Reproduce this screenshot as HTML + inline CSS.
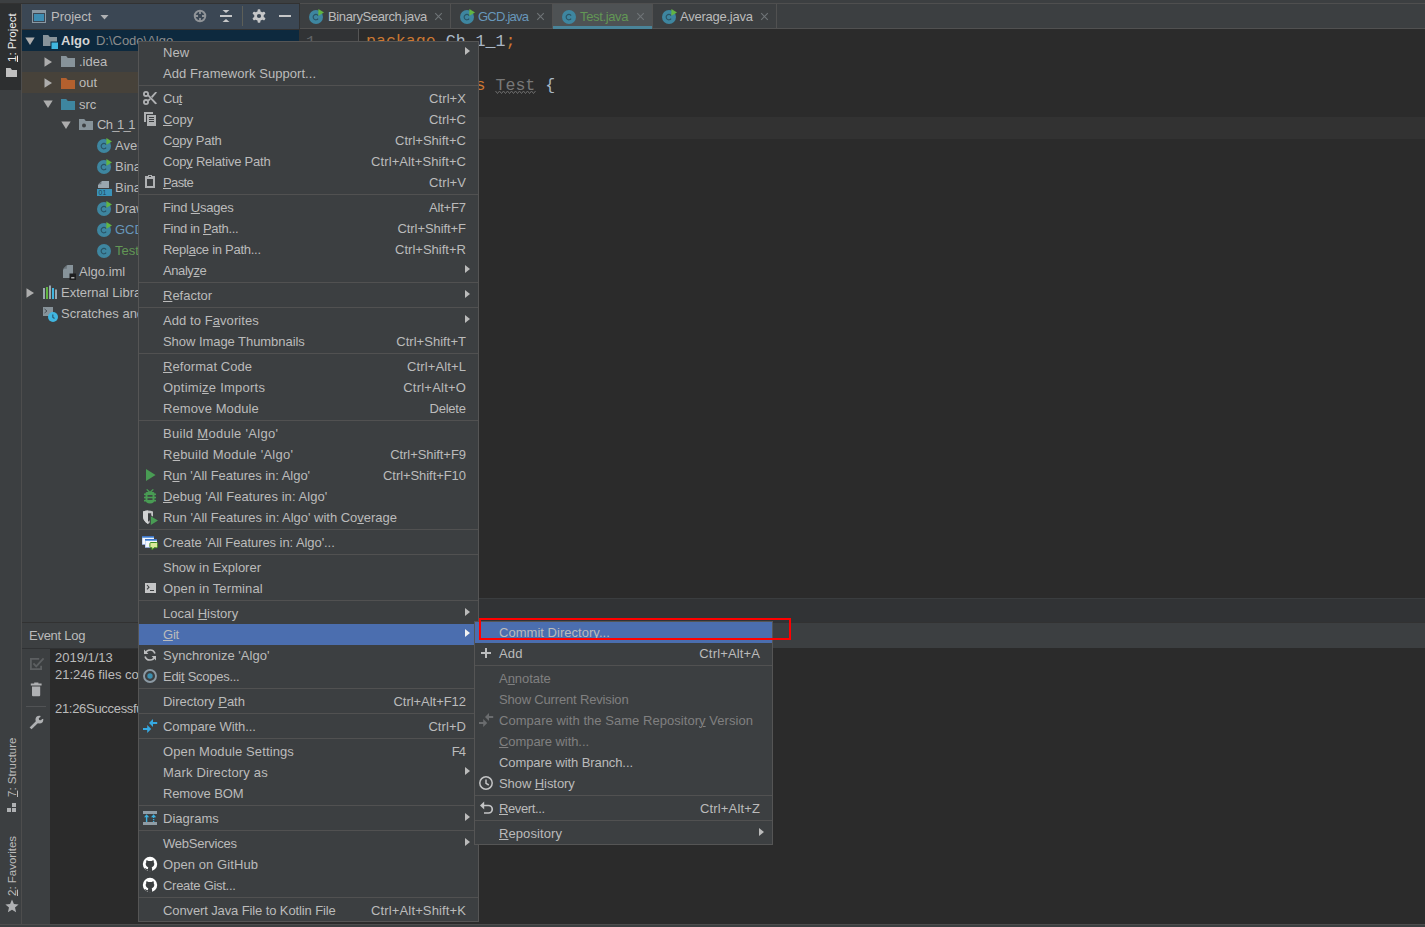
<!DOCTYPE html><html><head><meta charset="utf-8"><title>Algo</title><style>
*{box-sizing:border-box;margin:0;padding:0}
html,body{width:1425px;height:927px;overflow:hidden;background:#2b2b2b}
body{position:relative;font-family:"Liberation Sans",sans-serif;font-size:13px;color:#bbbbbb;line-height:21px;-webkit-font-smoothing:antialiased}
.abs{position:absolute}
.t{position:absolute;white-space:nowrap;height:21px;line-height:21px}
u{text-decoration:underline;text-underline-offset:1px;text-decoration-thickness:1px}
.menu{position:absolute;background:#3c3f41;border:1px solid #555555}
.mi{position:relative;height:21px;line-height:21px;white-space:nowrap}
.mi .l{position:absolute;left:24px;top:0}
.mi .s{position:absolute;right:12px;top:0}
.mi .ar{position:absolute;right:8.5px;top:5px;width:0;height:0;border-left:5.5px solid #bbbbbb;border-top:4.8px solid transparent;border-bottom:4.8px solid transparent}
.mi .ic{position:absolute;left:3px;top:2px;width:16px;height:16px}
.mi.sel{background:#4b6eaf}
.mi.sel .ar{border-left-color:#f2f2f2}
.mi.dis{color:#808080}
.sep{height:4px;position:relative}
.sep:after{content:"";position:absolute;left:0;right:0;top:1px;height:1px;background:#515151}
.row{position:absolute;left:22px;width:277px;height:21px}
.mono{font-family:"Liberation Mono",monospace;font-size:16.6px;line-height:22px;white-space:pre;position:absolute;height:22px}
.vt{position:absolute;white-space:nowrap;transform-origin:0 0;transform:rotate(-90deg);font-size:11.5px;line-height:14px;height:14px}
</style></head><body>
<div class="abs" style="left:0px;top:0px;width:1425px;height:4px;background:#3c3f41;"></div>
<div class="abs" style="left:0px;top:3px;width:1425px;height:1px;background:#323232;"></div>
<div class="abs" style="left:0px;top:4px;width:21px;height:920px;background:#3c3f41;"></div>
<div class="abs" style="left:0px;top:4px;width:21px;height:86px;background:#2d2f30;"></div>
<div class="abs" style="left:21px;top:4px;width:1px;height:920px;background:#4d4d4d;"></div>
<div class="abs" style="left:22px;top:4px;width:277px;height:25px;background:#3b4754;"></div>
<div class="abs" style="left:22px;top:29px;width:277px;height:1px;background:#323232;"></div>
<div class="abs" style="left:22px;top:30px;width:277px;height:592px;background:#3c3f41;"></div>
<div class="abs" style="left:299px;top:4px;width:1px;height:619px;background:#323232;"></div>
<div class="abs" style="left:22px;top:30px;width:277px;height:21px;background:#0d293e;"></div>
<div class="abs" style="left:22px;top:72px;width:277px;height:21px;background:#47423a;"></div>
<div class="abs" style="left:300px;top:3px;width:1125px;height:1px;background:#4f4f4f;"></div>
<div class="abs" style="left:300px;top:4px;width:1125px;height:24px;background:#3c3f41;"></div>
<div class="abs" style="left:300px;top:28px;width:1125px;height:1px;background:#515151;"></div>
<div class="abs" style="left:300px;top:29px;width:58px;height:569px;background:#313335;"></div>
<div class="abs" style="left:358px;top:29px;width:1px;height:569px;background:#555555;"></div>
<div class="abs" style="left:359px;top:29px;width:1066px;height:569px;background:#2b2b2b;"></div>
<div class="abs" style="left:359px;top:117px;width:1066px;height:22px;background:#323232;"></div>
<div class="abs" style="left:22px;top:598px;width:1403px;height:25px;background:#313335;"></div>
<div class="abs" style="left:300px;top:598px;width:1125px;height:1px;background:#3a3d3f;"></div>
<div class="abs" style="left:22px;top:597px;width:277px;height:26px;background:#3c3f41;"></div>
<div class="abs" style="left:22px;top:622px;width:1403px;height:1px;background:#323232;"></div>
<div class="abs" style="left:22px;top:623px;width:1403px;height:25px;background:#3c3f41;"></div>
<div class="abs" style="left:22px;top:648px;width:28px;height:277px;background:#3c3f41;"></div>
<div class="abs" style="left:50px;top:648px;width:1375px;height:277px;background:#2b2b2b;"></div>
<div class="abs" style="left:0px;top:924px;width:1425px;height:3px;background:#3c3f41;"></div>
<div class="abs" style="left:0px;top:924px;width:1425px;height:1px;background:#4d4d4d;"></div>
<div class="vt" style="left:5px;top:62px;color:#ededed"><u>1</u>: Project</div>
<svg class="abs" style="left:6px;top:68px;" width="12" height="10" viewBox="0 0 12 10"><path d="M0 0 H4.5 L6 2 H11 V9 H0 Z" fill="#c0c0c0"/></svg>
<div class="vt" style="left:5px;top:797px;color:#bbbbbb"><u>7</u>: Structure</div>
<svg class="abs" style="left:7px;top:803px;" width="9" height="9" viewBox="0 0 9 9"><rect x="0" y="5" width="4" height="4" fill="#afb1b3"/><rect x="5" y="5" width="4" height="4" fill="#afb1b3"/><rect x="5" y="0" width="4" height="4" fill="#afb1b3"/></svg>
<div class="vt" style="left:5px;top:896px;color:#bbbbbb"><u>2</u>: Favorites</div>
<svg class="abs" style="left:5px;top:899px;" width="14" height="14" viewBox="0 0 14 14"><path d="M7 0.5 L8.9 5 L13.6 5.4 L10 8.6 L11.1 13.3 L7 10.8 L2.9 13.3 L4 8.6 L0.4 5.4 L5.1 5 Z" fill="#afb1b3"/></svg>
<svg class="abs" style="left:32px;top:10px;" width="14" height="13" viewBox="0 0 14 13"><rect x="0" y="0" width="14" height="13" fill="#8a98a3"/><rect x="1" y="3" width="12" height="9" fill="#3b4754"/><rect x="2" y="4" width="10" height="7" fill="#3e8cb2"/></svg>
<div class="t" style="left:51px;top:6px;">Project</div>
<svg class="abs" style="left:100px;top:15px;" width="9" height="5" viewBox="0 0 9 5"><path d="M0.5 0 H8.5 L4.5 4.5 Z" fill="#afb1b3"/></svg>
<svg class="abs" style="left:193px;top:9px;" width="14" height="14" viewBox="0 0 14 14"><circle cx="7" cy="7" r="5.3" fill="none" stroke="#909498" stroke-width="1.9"/><path d="M7 1.5 V5 M7 9 V12.5 M1.5 7 H5 M9 7 H12.5" stroke="#909498" stroke-width="1.8"/></svg>
<svg class="abs" style="left:219px;top:9px;" width="14" height="14" viewBox="0 0 14 14"><rect x="1" y="6" width="12" height="2" fill="#c6c7c8"/><path d="M3.5 1 H10.5 L7 4 Z" fill="#c6c7c8"/><path d="M3.5 13 H10.5 L7 10 Z" fill="#c6c7c8"/></svg>
<div class="abs" style="left:242px;top:6px;width:1px;height:20px;background:#5d5f58;"></div>
<svg class="abs" style="left:252px;top:9px;" width="14" height="14" viewBox="0 0 14 14"><g fill="#c6c7c8"><rect x="5.6" y="0.2" width="2.8" height="13.6" rx="0.8" transform="rotate(0 7 7)"/><rect x="5.6" y="0.2" width="2.8" height="13.6" rx="0.8" transform="rotate(60 7 7)"/><rect x="5.6" y="0.2" width="2.8" height="13.6" rx="0.8" transform="rotate(120 7 7)"/><circle cx="7" cy="7" r="4.8"/></g><circle cx="7" cy="7" r="2.1" fill="#3b4754"/></svg>
<div class="abs" style="left:279px;top:15px;width:12px;height:2px;background:#c6c7c8;"></div>
<svg class="abs" style="left:25px;top:37px;" width="10" height="8" viewBox="0 0 10 8"><path d="M0.3 0.5 H9.7 L5 8 Z" fill="#adadad"/></svg>
<svg class="abs" style="left:42px;top:33px;" width="16" height="16" viewBox="0 0 16 16"><path d="M1 2 H6.2 L7.8 4 H15 V13 H1 Z" fill="#87939a"/><rect x="8.5" y="8.5" width="7.5" height="7.5" fill="#0d293e"/><rect x="9.5" y="9.5" width="6.5" height="6.5" fill="#40b6e0"/></svg>
<div class="t" style="left:61px;top:30px;"><b style="color:#d4d4d4">Algo</b><span style="color:#8c8c8c;margin-left:6px">D:\Code\Algo</span></div>
<svg class="abs" style="left:44px;top:57px;" width="8" height="10" viewBox="0 0 8 10"><path d="M0.5 0.3 V9.7 L8 5 Z" fill="#adadad"/></svg>
<svg class="abs" style="left:60px;top:54px;" width="16" height="16" viewBox="0 0 16 16"><path d="M1 2 H6.2 L7.8 4 H15 V13 H1 Z" fill="#87939a"/></svg>
<div class="t" style="left:79px;top:51px;">.idea</div>
<svg class="abs" style="left:44px;top:78px;" width="8" height="10" viewBox="0 0 8 10"><path d="M0.5 0.3 V9.7 L8 5 Z" fill="#adadad"/></svg>
<svg class="abs" style="left:60px;top:76px;" width="16" height="16" viewBox="0 0 16 16"><path d="M1 2 H6.2 L7.8 4 H15 V13 H1 Z" fill="#b3602e"/></svg>
<div class="t" style="left:79px;top:72px;">out</div>
<svg class="abs" style="left:43px;top:100px;" width="10" height="8" viewBox="0 0 10 8"><path d="M0.3 0.5 H9.7 L5 8 Z" fill="#adadad"/></svg>
<svg class="abs" style="left:60px;top:97px;" width="16" height="16" viewBox="0 0 16 16"><path d="M1 2 H6.2 L7.8 4 H15 V13 H1 Z" fill="#3e86a0"/></svg>
<div class="t" style="left:79px;top:94px;">src</div>
<svg class="abs" style="left:61px;top:121px;" width="10" height="8" viewBox="0 0 10 8"><path d="M0.3 0.5 H9.7 L5 8 Z" fill="#adadad"/></svg>
<svg class="abs" style="left:78px;top:117px;" width="16" height="16" viewBox="0 0 16 16"><path d="M1 2 H6.2 L7.8 4 H15 V13 H1 Z" fill="#87939a"/><circle cx="6" cy="8.6" r="2" fill="#3c3f41"/></svg>
<div class="t" style="left:97px;top:114px;"><span style="letter-spacing:-0.75px">Ch<span style="letter-spacing:-2.4px">_</span>1<span style="letter-spacing:-2.4px">_</span>1</span></div>
<svg class="abs" style="left:96px;top:138px;" width="16" height="16" viewBox="0 0 16 16"><circle cx="8" cy="8" r="7" fill="#3e86a0"/><path d="M10.1 6.6 A2.7 2.7 0 1 0 10.1 9.6" fill="none" stroke="#2a5364" stroke-width="1.15"/><path d="M10.4 0 L16 3.4 L10.4 6.8 Z" fill="#62b543"/></svg>
<div class="t" style="left:115px;top:135px;">Average</div>
<svg class="abs" style="left:96px;top:159px;" width="16" height="16" viewBox="0 0 16 16"><circle cx="8" cy="8" r="7" fill="#3e86a0"/><path d="M10.1 6.6 A2.7 2.7 0 1 0 10.1 9.6" fill="none" stroke="#2a5364" stroke-width="1.15"/><path d="M10.4 0 L16 3.4 L10.4 6.8 Z" fill="#62b543"/></svg>
<div class="t" style="left:115px;top:156px;">BinarySearch</div>
<svg class="abs" style="left:96px;top:180px;" width="16" height="16" viewBox="0 0 16 16"><path d="M6 1 H13 V8 H2 V5 Z" fill="#9aa7b0"/><path d="M5.3 1.2 V4.3 H2.2 Z" fill="#6c767c"/><rect x="1" y="9" width="15" height="7" fill="#3a92b8"/><text x="2.6" y="15" font-family="Liberation Sans,sans-serif" font-size="7" fill="#1f4456">01</text></svg>
<div class="t" style="left:115px;top:177px;">BinarySearch</div>
<svg class="abs" style="left:96px;top:201px;" width="16" height="16" viewBox="0 0 16 16"><circle cx="8" cy="8" r="7" fill="#3e86a0"/><path d="M10.1 6.6 A2.7 2.7 0 1 0 10.1 9.6" fill="none" stroke="#2a5364" stroke-width="1.15"/><path d="M10.4 0 L16 3.4 L10.4 6.8 Z" fill="#62b543"/></svg>
<div class="t" style="left:115px;top:198px;">Draw</div>
<svg class="abs" style="left:96px;top:222px;" width="16" height="16" viewBox="0 0 16 16"><circle cx="8" cy="8" r="7" fill="#3e86a0"/><path d="M10.1 6.6 A2.7 2.7 0 1 0 10.1 9.6" fill="none" stroke="#2a5364" stroke-width="1.15"/><path d="M10.4 0 L16 3.4 L10.4 6.8 Z" fill="#62b543"/></svg>
<div class="t" style="left:115px;top:219px;"><span style="color:#6897bb">GCD</span></div>
<svg class="abs" style="left:96px;top:243px;" width="16" height="16" viewBox="0 0 16 16"><circle cx="8" cy="8" r="7" fill="#3e86a0"/><path d="M10.1 6.6 A2.7 2.7 0 1 0 10.1 9.6" fill="none" stroke="#2a5364" stroke-width="1.15"/></svg>
<div class="t" style="left:115px;top:240px;"><span style="color:#629755">Test</span></div>
<svg class="abs" style="left:60px;top:264px;" width="16" height="16" viewBox="0 0 16 16"><path d="M7.5 1 H13 V14 H3 V5.5 Z" fill="#87939a"/><path d="M6.8 1 V4.8 H3 Z" fill="#6a747a"/><rect x="9.5" y="9.5" width="6.5" height="6.5" fill="#1e1f20"/><rect x="11.2" y="13.2" width="3.2" height="1.2" fill="#d0d0d0"/></svg>
<div class="t" style="left:79px;top:261px;">Algo.iml</div>
<svg class="abs" style="left:26px;top:288px;" width="8" height="10" viewBox="0 0 8 10"><path d="M0.5 0.3 V9.7 L8 5 Z" fill="#adadad"/></svg>
<svg class="abs" style="left:42px;top:285px;" width="16" height="16" viewBox="0 0 16 16"><rect x="1" y="3" width="2" height="11" fill="#9aa7b0"/><rect x="4" y="2" width="2" height="12" fill="#62b543"/><rect x="7" y="0.5" width="2" height="13.5" fill="#9aa7b0"/><rect x="10" y="3" width="2" height="11" fill="#40b6e0"/><rect x="13" y="4.5" width="2" height="9.5" fill="#9aa7b0"/></svg>
<div class="t" style="left:61px;top:282px;">External Libraries</div>
<svg class="abs" style="left:42px;top:306px;" width="16" height="16" viewBox="0 0 16 16"><rect x="1" y="1" width="10" height="9" fill="#87939a"/><path d="M2.5 3 L5 5 L2.5 7" fill="none" stroke="#4a5156" stroke-width="1"/><circle cx="11" cy="11" r="5" fill="#40b6e0"/><path d="M10.8 8.5 V11.3 L12.5 12.6" fill="none" stroke="#2a5a72" stroke-width="1.2"/></svg>
<div class="t" style="left:61px;top:303px;">Scratches and Consoles</div>
<svg class="abs" style="left:308px;top:9px;" width="16" height="16" viewBox="0 0 16 16"><circle cx="8" cy="8" r="7" fill="#3e86a0"/><path d="M10.1 6.6 A2.7 2.7 0 1 0 10.1 9.6" fill="none" stroke="#2a5364" stroke-width="1.15"/><path d="M10.4 0 L16 3.4 L10.4 6.8 Z" fill="#62b543"/></svg>
<div class="t" style="left:328px;top:6px;"><span style="color:#bbbbbb;letter-spacing:-0.387px">BinarySearch.java</span></div>
<svg class="abs" style="left:434px;top:12px;" width="9" height="9" viewBox="0 0 9 9"><path d="M1.2 1.2 L7.8 7.8 M7.8 1.2 L1.2 7.8" stroke="#6f7477" stroke-width="1.1" fill="none"/></svg>
<div class="abs" style="left:450px;top:4px;width:1px;height:24px;background:#515151;"></div>
<svg class="abs" style="left:459px;top:9px;" width="16" height="16" viewBox="0 0 16 16"><circle cx="8" cy="8" r="7" fill="#3e86a0"/><path d="M10.1 6.6 A2.7 2.7 0 1 0 10.1 9.6" fill="none" stroke="#2a5364" stroke-width="1.15"/><path d="M10.4 0 L16 3.4 L10.4 6.8 Z" fill="#62b543"/></svg>
<div class="t" style="left:478px;top:6px;"><span style="color:#6897bb;letter-spacing:-0.757px">GCD.java</span></div>
<svg class="abs" style="left:536px;top:12px;" width="9" height="9" viewBox="0 0 9 9"><path d="M1.2 1.2 L7.8 7.8 M7.8 1.2 L1.2 7.8" stroke="#6f7477" stroke-width="1.1" fill="none"/></svg>
<div class="abs" style="left:552px;top:4px;width:1px;height:24px;background:#515151;"></div>
<div class="abs" style="left:553px;top:4px;width:99px;height:24px;background:#4e5254;"></div>
<div class="abs" style="left:553px;top:26px;width:99px;height:3px;background:#4a8499;"></div>
<svg class="abs" style="left:561px;top:9px;" width="16" height="16" viewBox="0 0 16 16"><circle cx="8" cy="8" r="7" fill="#3e86a0"/><path d="M10.1 6.6 A2.7 2.7 0 1 0 10.1 9.6" fill="none" stroke="#2a5364" stroke-width="1.15"/></svg>
<div class="t" style="left:580px;top:6px;"><span style="color:#629755;letter-spacing:-0.362px">Test.java</span></div>
<svg class="abs" style="left:636px;top:12px;" width="9" height="9" viewBox="0 0 9 9"><path d="M1.2 1.2 L7.8 7.8 M7.8 1.2 L1.2 7.8" stroke="#6f7477" stroke-width="1.1" fill="none"/></svg>
<div class="abs" style="left:652px;top:4px;width:1px;height:24px;background:#515151;"></div>
<svg class="abs" style="left:661px;top:9px;" width="16" height="16" viewBox="0 0 16 16"><circle cx="8" cy="8" r="7" fill="#3e86a0"/><path d="M10.1 6.6 A2.7 2.7 0 1 0 10.1 9.6" fill="none" stroke="#2a5364" stroke-width="1.15"/><path d="M10.4 0 L16 3.4 L10.4 6.8 Z" fill="#62b543"/></svg>
<div class="t" style="left:680px;top:6px;"><span style="color:#bbbbbb;letter-spacing:-0.245px">Average.java</span></div>
<svg class="abs" style="left:760px;top:12px;" width="9" height="9" viewBox="0 0 9 9"><path d="M1.2 1.2 L7.8 7.8 M7.8 1.2 L1.2 7.8" stroke="#6f7477" stroke-width="1.1" fill="none"/></svg>
<div class="abs" style="left:776px;top:4px;width:1px;height:24px;background:#515151;"></div>
<div class="mono" style="left:306px;top:32px;color:#606366;font-size:16px">1</div>
<div class="mono" style="left:366px;top:31px;color:#a9b7c6"><span style="color:#cc7832">package</span> Ch_1_1<span style="color:#cc7832">;</span></div>
<div class="mono" style="left:366px;top:75px;color:#a9b7c6"><span style="color:#cc7832">public class</span> <span style="color:#787878">Test</span> {</div>
<svg class="abs" style="left:495px;top:90px;" width="42" height="5" viewBox="0 0 42 5"><path d="M0.5 1 L2.5 3.5 L4.5 1 L6.5 3.5 L8.5 1 L10.5 3.5 L12.5 1 L14.5 3.5 L16.5 1 L18.5 3.5 L20.5 1 L22.5 3.5 L24.5 1 L26.5 3.5 L28.5 1 L30.5 3.5 L32.5 1 L34.5 3.5 L36.5 1 L38.5 3.5 L40.5 1" fill="none" stroke="#6c6c6c" stroke-width="1"/></svg>
<div class="abs" style="left:22px;top:648px;width:116px;height:1px;background:#2f3133;"></div>
<div class="t" style="left:29px;top:625px;"><span style="letter-spacing:-0.263px">Event Log</span></div>
<svg class="abs" style="left:29px;top:657px;" width="16" height="16" viewBox="0 0 16 16"><path d="M10.2 1.9 H1.9 V12.1 H12.1 V8.8" fill="none" stroke="#5c5f61" stroke-width="1.8"/><path d="M4.4 6.4 L7.2 9.4 L14.6 1.4" fill="none" stroke="#5c5f61" stroke-width="1.8"/></svg>
<svg class="abs" style="left:29px;top:682px;" width="16" height="16" viewBox="0 0 16 16"><path d="M1.8 1.5 H5.2 V0.6 H9.4 V1.5 H12.6 V3.5 H1.8 Z" fill="#afb1b3"/><path d="M3 4.6 H11.2 V13.2 Q11.2 14.2 10.2 14.2 H4 Q3 14.2 3 13.2 Z" fill="#afb1b3"/></svg>
<div class="abs" style="left:26px;top:706px;width:20px;height:1px;background:#515355;"></div>
<svg class="abs" style="left:29px;top:714px;" width="16" height="16" viewBox="0 0 16 16"><path d="M1.6 14.4 L8.8 7.2" stroke="#afb1b3" stroke-width="2.7" fill="none"/><circle cx="10.4" cy="5.6" r="3.9" fill="#afb1b3"/><path d="M10.6 5.4 L12.2 0 L17 4.4 Z" fill="#3c3f41"/><circle cx="11.3" cy="4.7" r="1.5" fill="#3c3f41"/></svg>
<div class="t" style="left:55px;top:647px;">2019/1/13</div>
<div class="t" style="left:55px;top:664px;">21:246 files co</div>
<div class="t" style="left:55px;top:698px;"><span style="letter-spacing:-0.3px">21:26Successfully</span></div>
<div class="menu" style="left:138px;top:41px;width:341px">
<div class="mi"><span class="l" style="letter-spacing:0.1px">New</span><span class="ar"></span></div>
<div class="mi"><span class="l" style="letter-spacing:0.057px">Add Framework Support...</span></div>
<div class="sep"></div>
<div class="mi"><svg class="ic" viewBox="0 0 16 16"><g fill="none" stroke="#afb1b3" stroke-width="1.8"><circle cx="4" cy="3.9" r="2.1"/><circle cx="4" cy="12.1" r="2.1"/></g><path d="M5.2 5.6 L6.6 4.6 L15.2 13.4 L13.2 14.2 Z" fill="#afb1b3"/><path d="M5.2 10.4 L7.4 8.2 L8.8 9.6 L6.6 11.4 Z" fill="#afb1b3"/><path d="M9 6.6 L13.2 2 L15.2 2.2 L10.4 8 Z" fill="#afb1b3"/></svg><span class="l" style="letter-spacing:-0.45px">Cu<u>t</u></span><span class="s" style="letter-spacing:0.1px;margin-right:-0.1px">Ctrl+X</span></div>
<div class="mi"><svg class="ic" viewBox="0 0 16 16"><path d="M2 1 H11 V3 H4 V11 H2 Z" fill="#afb1b3"/><rect x="5" y="4" width="9" height="11" fill="#afb1b3"/><rect x="7" y="6" width="5" height="1" fill="#3c3f41"/><rect x="7" y="8" width="5" height="1" fill="#3c3f41"/><rect x="7" y="10" width="5" height="1" fill="#3c3f41"/></svg><span class="l" style="letter-spacing:-0.067px"><u>C</u>opy</span><span class="s" style="letter-spacing:-0.04px;margin-right:0.04px">Ctrl+C</span></div>
<div class="mi"><span class="l" style="letter-spacing:-0.237px">C<u>o</u>py Path</span><span class="s" style="letter-spacing:0.009px;margin-right:-0.009px">Ctrl+Shift+C</span></div>
<div class="mi"><span class="l" style="letter-spacing:-0.212px">Cop<u>y</u> Relative Path</span><span class="s" style="letter-spacing:0.087px;margin-right:-0.087px">Ctrl+Alt+Shift+C</span></div>
<div class="mi"><svg class="ic" viewBox="0 0 16 16"><path d="M3 2 H6 V1 H10 V2 H13 V14 H3 Z M5 5 V12 H11 V5 Z" fill="#afb1b3" fill-rule="evenodd"/><rect x="7" y="2" width="2" height="1" fill="#3c3f41"/></svg><span class="l" style="letter-spacing:-0.625px"><u>P</u>aste</span><span class="s" style="letter-spacing:0.1px;margin-right:-0.1px">Ctrl+V</span></div>
<div class="sep"></div>
<div class="mi"><span class="l" style="letter-spacing:-0.23px">Find <u>U</u>sages</span><span class="s" style="letter-spacing:-0.18px;margin-right:0.18px">Alt+F7</span></div>
<div class="mi"><span class="l" style="letter-spacing:-0.329px">Find in <u>P</u>ath...</span><span class="s" style="letter-spacing:-0.073px;margin-right:0.073px">Ctrl+Shift+F</span></div>
<div class="mi"><span class="l" style="letter-spacing:-0.271px">Repl<u>a</u>ce in Path...</span><span class="s" style="letter-spacing:0.009px;margin-right:-0.009px">Ctrl+Shift+R</span></div>
<div class="mi"><span class="l" style="letter-spacing:-0.417px">Analy<u>z</u>e</span><span class="ar"></span></div>
<div class="sep"></div>
<div class="mi"><span class="l"><u>R</u>efactor</span><span class="ar"></span></div>
<div class="sep"></div>
<div class="mi"><span class="l" style="letter-spacing:0.073px">Add to F<u>a</u>vorites</span><span class="ar"></span></div>
<div class="mi"><span class="l" style="letter-spacing:-0.05px">Show Image Thumbnails</span><span class="s" style="letter-spacing:0.036px;margin-right:-0.036px">Ctrl+Shift+T</span></div>
<div class="sep"></div>
<div class="mi"><span class="l" style="letter-spacing:0.075px"><u>R</u>eformat Code</span><span class="s" style="letter-spacing:0.133px;margin-right:-0.133px">Ctrl+Alt+L</span></div>
<div class="mi"><span class="l" style="letter-spacing:0.247px">Optimi<u>z</u>e Imports</span><span class="s" style="letter-spacing:0.233px;margin-right:-0.233px">Ctrl+Alt+O</span></div>
<div class="mi"><span class="l" style="letter-spacing:0.092px">Remove Module</span><span class="s" style="letter-spacing:-0.22px;margin-right:0.22px">Delete</span></div>
<div class="sep"></div>
<div class="mi"><span class="l" style="letter-spacing:0.289px">Build <u>M</u>odule 'Algo'</span></div>
<div class="mi"><span class="l" style="letter-spacing:0.25px">R<u>e</u>build Module 'Algo'</span><span class="s" style="letter-spacing:-0.067px;margin-right:0.067px">Ctrl+Shift+F9</span></div>
<div class="mi"><svg class="ic" viewBox="0 0 16 16"><path d="M4 2 L13.6 8 L4 14 Z" fill="#499c54"/></svg><span class="l" style="letter-spacing:-0.038px">R<u>u</u>n 'All Features in: Algo'</span><span class="s" style="letter-spacing:-0.062px;margin-right:0.062px">Ctrl+Shift+F10</span></div>
<div class="mi"><svg class="ic" viewBox="0 0 16 16"><g fill="#499c54"><path d="M5.2 1 L8 3.6 L10.8 1 L11.8 1.8 L9 4.6 H7 L4.2 1.8 Z"/><path d="M4.5 4 H11.5 Q12.5 4 12.5 5.5 V11 Q12.5 15.5 8 15.5 Q3.5 15.5 3.5 11 V5.5 Q3.5 4 4.5 4 Z"/><rect x="2" y="5.5" width="12" height="1.6"/><rect x="2" y="8.7" width="12" height="1.6"/><rect x="2" y="11.9" width="12" height="1.6"/></g><rect x="5.5" y="7.1" width="5" height="1.6" fill="#3c3f41"/><rect x="5.5" y="10.3" width="5" height="1.6" fill="#3c3f41"/></svg><span class="l" style="letter-spacing:0.064px"><u>D</u>ebug 'All Features in: Algo'</span></div>
<div class="mi"><svg class="ic" viewBox="0 0 16 16"><path d="M1 2.4 Q6 0.8 11 2.4 V8 Q10.6 12.2 6 15 Q1.4 12.2 1 8 Z" fill="#c3c4c5"/><path d="M1 2.4 Q3.5 1.6 6 1.6 V15 Q1.4 12.2 1 8 Z" fill="#d2d3d4"/><path d="M6 4.2 H9.2 V8 Q9 10.8 6 12.8 Z" fill="#3c3f41"/><path d="M7.6 5.4 L17 11.4 L7.6 17.4 Z" fill="#3c3f41"/><path d="M8.8 7.2 L16 11.6 L8.8 16 Z" fill="#499c54"/></svg><span class="l" style="letter-spacing:-0.02px">Run 'All Features in: Algo' with Co<u>v</u>erage</span></div>
<div class="sep"></div>
<div class="mi"><svg class="ic" viewBox="0 0 16 16"><defs><linearGradient id="cg" x1="0" y1="0" x2="0" y2="1"><stop offset="0" stop-color="#2a5fb8"/><stop offset="1" stop-color="#7fb4ea"/></linearGradient></defs><rect x="0" y="2" width="12" height="9" fill="#f4f7fd"/><rect x="0" y="2" width="12" height="2" fill="url(#cg)"/><rect x="0" y="4" width="1" height="7" fill="#c5d4f0"/><rect x="0" y="10" width="12" height="1" fill="#8da4d4"/><rect x="3" y="5" width="12" height="9" fill="#f4f7fd"/><rect x="3" y="5" width="12" height="2" fill="url(#cg)"/><rect x="3" y="7" width="1" height="7" fill="#c5d4f0"/><rect x="3" y="13" width="5" height="1" fill="#8da4d4"/><path d="M9 8.5 H14.5 Q15.6 8.5 15.6 9.6 V12.6 Q15.6 13.7 14.5 13.7 H12 L10 16 V13.7 H9 Q7.9 13.7 7.9 12.6 V9.6 Q7.9 8.5 9 8.5 Z" fill="#d9ea9a" stroke="#3f8f22" stroke-width="1"/></svg><span class="l" style="letter-spacing:-0.072px">Create 'All Features in: Algo'...</span></div>
<div class="sep"></div>
<div class="mi"><span class="l" style="letter-spacing:-0.02px">Show in Explorer</span></div>
<div class="mi"><svg class="ic" viewBox="0 0 16 16"><rect x="3" y="3" width="11" height="10" fill="#c4c5c6"/><path d="M5 5 L7 7.2 L5 9.4" fill="none" stroke="#3c3f41" stroke-width="1.1"/><rect x="8" y="10" width="4" height="1" fill="#3c3f41"/></svg><span class="l" style="letter-spacing:0.107px">Open in Terminal</span></div>
<div class="sep"></div>
<div class="mi"><span class="l">Local <u>H</u>istory</span><span class="ar"></span></div>
<div class="mi sel"><span class="l" style="letter-spacing:-0.25px"><u>G</u>it</span><span class="ar"></span></div>
<div class="mi"><svg class="ic" viewBox="0 0 16 16"><g fill="none" stroke="#bcbdbe" stroke-width="1.7"><path d="M3.4 6.3 A5 5 0 0 1 12.9 6.6"/><path d="M12.6 9.7 A5 5 0 0 1 3.1 9.4"/></g><path d="M2 2.6 V7 H6.4 Z" fill="#bcbdbe"/><path d="M14 13.4 V9 H9.6 Z" fill="#bcbdbe"/></svg><span class="l" style="letter-spacing:0.018px">Synchronize 'Algo'</span></div>
<div class="mi"><svg class="ic" viewBox="0 0 16 16"><circle cx="8" cy="8" r="6" fill="none" stroke="#8c9aa4" stroke-width="1.9"/><circle cx="8" cy="8" r="2.7" fill="#3b8fb0"/></svg><span class="l" style="letter-spacing:-0.269px">Edi<u>t</u> Scopes...</span></div>
<div class="sep"></div>
<div class="mi"><span class="l" style="letter-spacing:-0.038px">Directory <u>P</u>ath</span><span class="s" style="letter-spacing:-0.045px;margin-right:0.045px">Ctrl+Alt+F12</span></div>
<div class="sep"></div>
<div class="mi"><svg class="ic" viewBox="0 0 16 16"><path d="M7 5 L11 1 V4 H15.2 V6 H11 V9 Z" fill="#35a9e2"/><path d="M9.2 11 L5.2 7 V10 H1 V12 H5.2 V15 Z" fill="#35a9e2"/></svg><span class="l" style="letter-spacing:-0.071px">Compare With...</span><span class="s" style="letter-spacing:0.08px;margin-right:-0.08px">Ctrl+D</span></div>
<div class="sep"></div>
<div class="mi"><span class="l" style="letter-spacing:0.116px">Open Module Settings</span><span class="s" style="letter-spacing:-0.8px;margin-right:0.8px">F4</span></div>
<div class="mi"><span class="l" style="letter-spacing:0.181px">Mark Directory as</span><span class="ar"></span></div>
<div class="mi"><span class="l" style="letter-spacing:-0.122px">Remove BOM</span></div>
<div class="sep"></div>
<div class="mi"><svg class="ic" viewBox="0 0 16 16"><rect x="1" y="1" width="14" height="3" fill="#8f9ca5"/><rect x="1" y="12" width="14" height="3" fill="#8f9ca5"/><g fill="#3bb0e0"><path d="M2 7.2 L4.6 4.2 L7.2 7.2 H5.3 V12 H3.9 V7.2 Z"/><path d="M9 7.2 L11.6 4.2 L14.2 7.2 H12.3 V8 H10.9 V7.2 Z"/><rect x="10.9" y="9" width="1.4" height="1.2"/><rect x="10.9" y="11" width="1.4" height="1"/></g></svg><span class="l" style="letter-spacing:0.029px">Diagrams</span><span class="ar"></span></div>
<div class="sep"></div>
<div class="mi"><span class="l" style="letter-spacing:-0.23px">WebServices</span><span class="ar"></span></div>
<div class="mi"><svg class="ic" viewBox="0 0 16 16"><circle cx="8" cy="8" r="7.2" fill="#ffffff"/><path d="M4.4 4.2 Q5.6 4.4 6.4 5.1 Q8 4.7 9.6 5.1 Q10.4 4.4 11.6 4.2 Q12 5.4 11.7 6.2 Q12.4 7.1 12.3 8.3 Q12 11 9.7 11.4 Q10.1 12 10.1 12.8 V15.4 H5.9 V14.2 Q4.2 14.5 3.5 13.2 Q3.2 12.5 2.6 12.2 Q3.4 11.9 4 12.6 Q4.7 13.5 5.9 13.1 Q6 12 6.3 11.4 Q4 11 3.7 8.3 Q3.6 7.1 4.3 6.2 Q4 5.4 4.4 4.2 Z" fill="#3c3f41"/></svg><span class="l" style="letter-spacing:0.077px">Open on GitHub</span></div>
<div class="mi"><svg class="ic" viewBox="0 0 16 16"><circle cx="8" cy="8" r="7.2" fill="#ffffff"/><path d="M4.4 4.2 Q5.6 4.4 6.4 5.1 Q8 4.7 9.6 5.1 Q10.4 4.4 11.6 4.2 Q12 5.4 11.7 6.2 Q12.4 7.1 12.3 8.3 Q12 11 9.7 11.4 Q10.1 12 10.1 12.8 V15.4 H5.9 V14.2 Q4.2 14.5 3.5 13.2 Q3.2 12.5 2.6 12.2 Q3.4 11.9 4 12.6 Q4.7 13.5 5.9 13.1 Q6 12 6.3 11.4 Q4 11 3.7 8.3 Q3.6 7.1 4.3 6.2 Q4 5.4 4.4 4.2 Z" fill="#3c3f41"/></svg><span class="l" style="letter-spacing:-0.285px">Create Gist...</span></div>
<div class="sep"></div>
<div class="mi"><span class="l" style="letter-spacing:-0.113px">Convert Java File to Kotlin File</span><span class="s" style="letter-spacing:0.14px;margin-right:-0.14px">Ctrl+Alt+Shift+K</span></div>
</div>
<div class="menu" style="left:474px;top:621px;width:299px">
<div class="mi sel"><span class="l" style="letter-spacing:0.028px">Commit Directory...</span></div>
<div class="mi"><svg class="ic" viewBox="0 0 16 16"><path d="M7 3 H9 V7 H13 V9 H9 V13 H7 V9 H3 V7 H7 Z" fill="#bdbebf"/></svg><span class="l" style="letter-spacing:0.2px">Add</span><span class="s" style="letter-spacing:0.156px;margin-right:-0.156px">Ctrl+Alt+A</span></div>
<div class="sep"></div>
<div class="mi dis"><span class="l" style="letter-spacing:-0.043px">A<u>n</u>notate</span></div>
<div class="mi dis"><span class="l" style="letter-spacing:-0.165px">Show Current Revision</span></div>
<div class="mi dis"><svg class="ic" viewBox="0 0 16 16"><path d="M7 5 L11 1 V4 H15.2 V6 H11 V9 Z" fill="#6a6c6e"/><path d="M9.2 11 L5.2 7 V10 H1 V12 H5.2 V15 Z" fill="#6a6c6e"/></svg><span class="l" style="letter-spacing:0.044px">Compare with the Same Repositor<u>y</u> Version</span></div>
<div class="mi dis"><span class="l" style="letter-spacing:-0.071px"><u>C</u>ompare with...</span></div>
<div class="mi"><span class="l" style="letter-spacing:-0.086px">Compare with Branch...</span></div>
<div class="mi"><svg class="ic" viewBox="0 0 16 16"><circle cx="8" cy="8" r="6.2" fill="none" stroke="#c4c5c6" stroke-width="1.5"/><path d="M8 4.5 V8.3 L10.8 10" fill="none" stroke="#c4c5c6" stroke-width="1.5"/></svg><span class="l" style="letter-spacing:-0.073px">Show <u>H</u>istory</span></div>
<div class="sep"></div>
<div class="mi"><svg class="ic" viewBox="0 0 16 16"><path d="M6 5.5 H10.5 A3.75 3.75 0 0 1 10.5 13 H6" fill="none" stroke="#c4c5c6" stroke-width="1.7"/><path d="M2 5.5 L6.2 1.6 V9.4 Z" fill="#c4c5c6"/></svg><span class="l" style="letter-spacing:-0.388px"><u>R</u>evert...</span><span class="s" style="letter-spacing:0.167px;margin-right:-0.167px">Ctrl+Alt+Z</span></div>
<div class="sep"></div>
<div class="mi"><span class="l" style="letter-spacing:0.089px"><u>R</u>epository</span><span class="ar"></span></div>
</div>
<div class="abs" style="left:479px;top:618px;width:312px;height:22px;border:2px solid #ff0000"></div>
</body></html>
